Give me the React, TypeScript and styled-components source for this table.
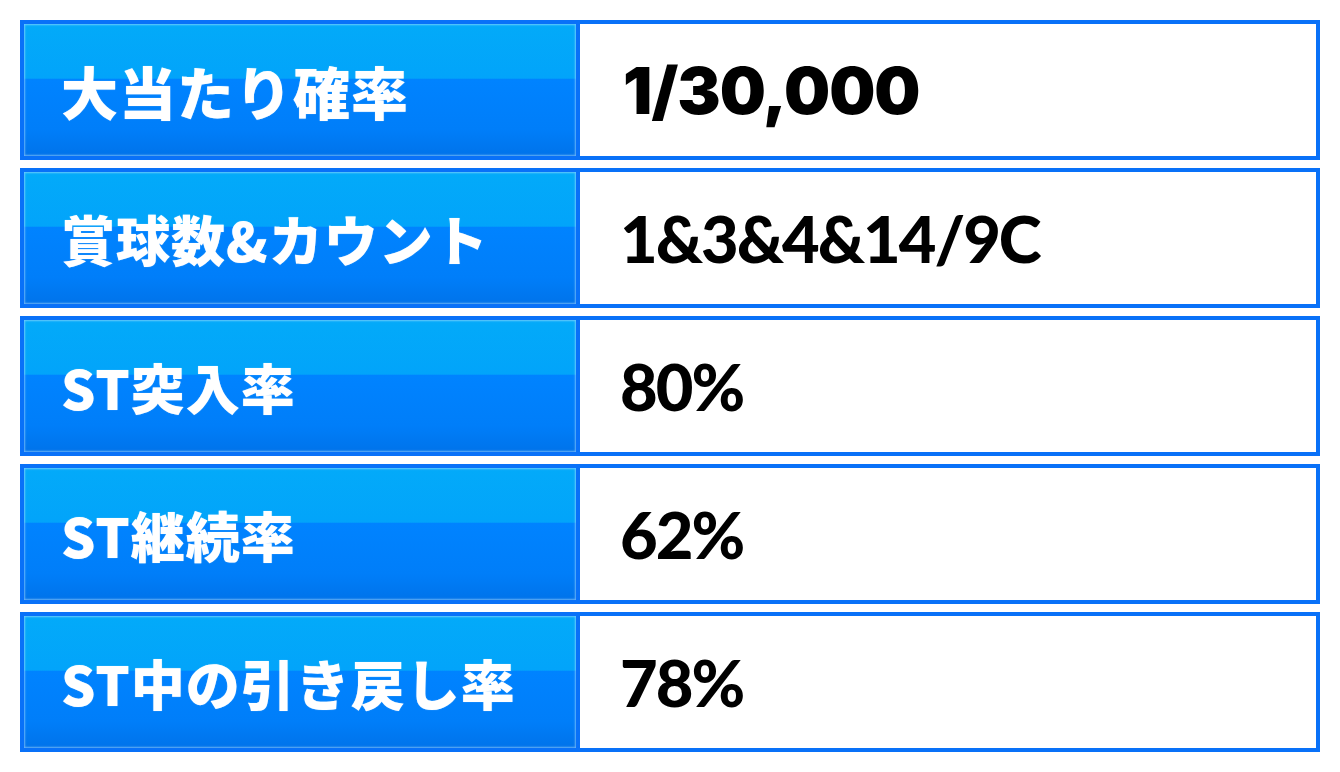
import React from 'react';
import styled, { createGlobalStyle } from 'styled-components';

const GlobalStyle = createGlobalStyle`
  html, body {
    margin: 0;
    padding: 0;
    background: #ffffff;
  }
`;

type SpecRow = {
  label: string;
  value: string;
  lead?: boolean;
};

const rows: SpecRow[] = [
  { label: '大当たり確率', value: '1/30,000', lead: true },
  { label: '賞球数&カウント', value: '1&3&4&14/9C' },
  { label: 'ST突入率', value: '80%' },
  { label: 'ST継続率', value: '62%' },
  { label: 'ST中の引き戻し率', value: '78%' },
];

const StyledTable = styled.div`
  display: flex;
  flex-direction: column;
  gap: 8px;
  width: 1300px;
  padding: 20px 0 0 20px;
`;

const StyledRow = styled.div`
  display: grid;
  grid-template-columns: 556px 1fr;
  height: 140px;
  box-sizing: border-box;
  border: 4px solid #0971f8;
`;

const StyledLabel = styled.div<{ $lead?: boolean }>`
  display: flex;
  align-items: center;
  padding-left: 37px;
  border-right: 4px solid #0971f8;
  background: linear-gradient(
    to bottom,
    #03aaf9 0%,
    #02a4fa 41%,
    #0083ff 42%,
    #007ef9 80%,
    #0073ea 100%
  );
  box-shadow: inset 0 0 2px 1px rgba(190, 230, 255, 0.55);
  color: #ffffff;
  font-family: 'Noto Sans CJK JP', 'Noto Sans', sans-serif;
  font-weight: 900;
  font-size: ${props => (props.$lead ? '57px' : '54px')};
  letter-spacing: 1px;
  white-space: nowrap;
  text-shadow: 0 0 1px rgba(255, 255, 255, 0.6);
`;

const StyledValue = styled.div<{ $lead?: boolean }>`
  display: flex;
  align-items: center;
  padding-left: ${props => (props.$lead ? '43px' : '40px')};
  background: #ffffff;
  color: #000000;
  font-family: ${props =>
    props.$lead ? "Inter, 'Liberation Sans', sans-serif" : "Lato, 'Noto Sans', sans-serif"};
  font-weight: 900;
  font-size: 65px;
  letter-spacing: ${props => (props.$lead ? '-1px' : '-2px')};
  white-space: nowrap;
`;

const App = () => {
  return (
    <>
      <GlobalStyle />
      <StyledTable>
        {rows.map(row => (
          <StyledRow key={row.label}>
            <StyledLabel $lead={row.lead}>{row.label}</StyledLabel>
            <StyledValue $lead={row.lead}>{row.value}</StyledValue>
          </StyledRow>
        ))}
      </StyledTable>
    </>
  );
};

export default App;
